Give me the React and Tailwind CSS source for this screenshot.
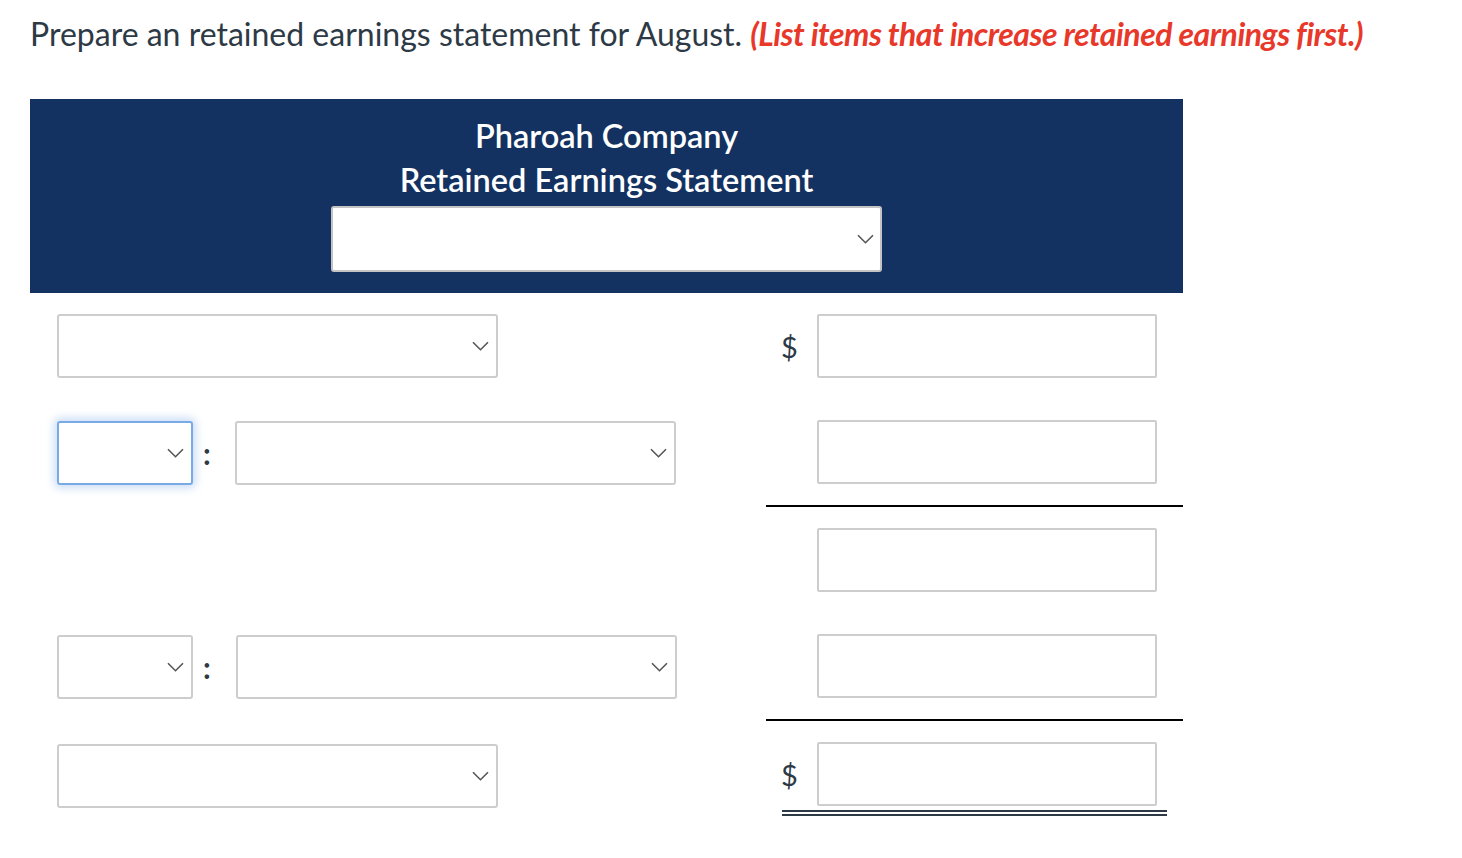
import React from 'react';

function Chevron() {
  return (
    <svg width="17" height="10" viewBox="0 0 17 10" className="shrink-0">
      <path d="M1 1.2l7.5 7.5 7.5-7.5" fill="none" stroke="#555" strokeWidth="1.6" />
    </svg>
  );
}

function Select({ className = '', focused = false }) {
  return (
    <div
      className={`h-[64px] bg-white rounded-[3px] flex items-center justify-end pr-[7px] border-2 ${
        focused
          ? 'border-[#7aaae6] shadow-[0_0_8px_3px_rgba(122,170,230,0.4)]'
          : 'border-[#cdcdcd]'
      } ${className}`}
    >
      <Chevron />
    </div>
  );
}

function Amount() {
  return <div className="w-[340px] h-[64px] bg-white border-2 border-[#cdcdcd] rounded-[2px]" />;
}

function Dollar({ show }) {
  return (
    <div className="w-[51px] pl-[15px] text-[29px] text-[#2d3a46] leading-none">
      {show ? '$' : ''}
    </div>
  );
}

function Colon() {
  return <div className="w-[42px] pl-[10px] text-[30px] font-bold text-[#2d3a46] leading-none">:</div>;
}

export default function App() {
  return (
    <div className="bg-white min-h-[858px] pl-[30px] pt-[13px]" style={{ fontFamily: 'Lato, "Open Sans", sans-serif' }}>
      <p className="text-[32px] text-[#2d3a46] leading-[42px]">
        Prepare an retained earnings statement for August.{' '}
        <span className="text-[#e8382a] font-bold italic tracking-[-0.5px]">
          (List items that increase retained earnings first.)
        </span>
      </p>

      <div className="mt-[44px] w-[1153px]">
        {/* Header */}
        <div className="bg-[#143261] h-[194px] flex flex-col items-center pt-[15px]">
          <div className="text-white text-[32.5px] font-semibold leading-[44px]">Pharoah Company</div>
          <div className="text-white text-[32.5px] font-semibold leading-[44px]">Retained Earnings Statement</div>
          <div className="w-[551px] h-[66px] mt-[4px] bg-white border-2 border-[#c4c4c4] rounded-[3px] flex items-center justify-end pr-[6px]">
            <Chevron />
          </div>
        </div>

        {/* Row 1 */}
        <div className="flex">
          <div className="w-[736px] pl-[27px] py-[21px] flex items-center">
            <Select className="w-[441px]" />
          </div>
          <div className="w-[417px] py-[21px] flex items-center">
            <Dollar show />
            <Amount />
          </div>
        </div>

        {/* Row 2 */}
        <div className="flex">
          <div className="w-[736px] pl-[27px] py-[21px] flex items-center">
            <Select className="w-[136px]" focused />
            <Colon />
            <Select className="w-[441px]" />
          </div>
          <div className="w-[417px] py-[21px] flex items-center border-b-2 border-black">
            <Dollar />
            <Amount />
          </div>
        </div>

        {/* Row 3 */}
        <div className="flex">
          <div className="w-[736px]" />
          <div className="w-[417px] py-[21px] flex items-center">
            <Dollar />
            <Amount />
          </div>
        </div>

        {/* Row 4 */}
        <div className="flex">
          <div className="w-[736px] pl-[27px] py-[21px] flex items-center">
            <Select className="w-[136px]" />
            <Colon />
            <Select className="w-[441px] ml-[1px]" />
          </div>
          <div className="w-[417px] py-[21px] flex items-center border-b-2 border-black">
            <Dollar />
            <Amount />
          </div>
        </div>

        {/* Row 5 */}
        <div className="flex">
          <div className="w-[736px] pl-[27px] pt-[23px] flex items-start">
            <Select className="w-[441px]" />
          </div>
          <div className="w-[417px] pt-[21px]">
            <div className="flex items-center">
              <Dollar show />
              <Amount />
            </div>
            <div className="ml-[16px] w-[385px] mt-[4px] border-b-[6px] border-double border-[#2d3a46]" />
          </div>
        </div>
      </div>
    </div>
  );
}
